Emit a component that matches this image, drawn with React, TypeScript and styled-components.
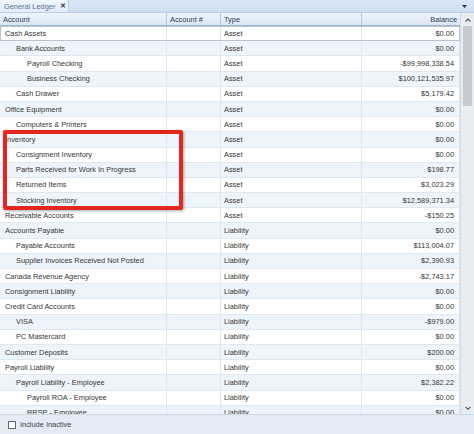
import React from "react";
import styled, { createGlobalStyle } from "styled-components";

const Global = createGlobalStyle`
  html, body { margin: 0; padding: 0; background: #ffffff; }
  body { font-family: "Liberation Sans", Arial, sans-serif; }
  * { box-sizing: border-box; }
`;

type Row = { name: string; level: number; type: string; balance: string };

const rows: Row[] = [
  { name: "Cash Assets", level: 0, type: "Asset", balance: "$0.00" },
  { name: "Bank Accounts", level: 1, type: "Asset", balance: "$0.00" },
  { name: "Payroll Checking", level: 2, type: "Asset", balance: "-$99,998,338.54" },
  { name: "Business Checking", level: 2, type: "Asset", balance: "$100,121,535.97" },
  { name: "Cash Drawer", level: 1, type: "Asset", balance: "$5,179.42" },
  { name: "Office Equipment", level: 0, type: "Asset", balance: "$0.00" },
  { name: "Computers & Printers", level: 1, type: "Asset", balance: "$0.00" },
  { name: "Inventory", level: 0, type: "Asset", balance: "$0.00" },
  { name: "Consignment Inventory", level: 1, type: "Asset", balance: "$0.00" },
  { name: "Parts Received for Work In Progress", level: 1, type: "Asset", balance: "$198.77" },
  { name: "Returned Items", level: 1, type: "Asset", balance: "$3,023.29" },
  { name: "Stocking Inventory", level: 1, type: "Asset", balance: "$12,589,371.34" },
  { name: "Receivable Accounts", level: 0, type: "Asset", balance: "-$150.25" },
  { name: "Accounts Payable", level: 0, type: "Liability", balance: "$0.00" },
  { name: "Payable Accounts", level: 1, type: "Liability", balance: "$113,004.07" },
  { name: "Supplier Invoices Received Not Posted", level: 1, type: "Liability", balance: "$2,390.93" },
  { name: "Canada Revenue Agency", level: 0, type: "Liability", balance: "-$2,743.17" },
  { name: "Consignment Liability", level: 0, type: "Liability", balance: "$0.00" },
  { name: "Credit Card Accounts", level: 0, type: "Liability", balance: "$0.00" },
  { name: "VISA", level: 1, type: "Liability", balance: "-$979.00" },
  { name: "PC Mastercard", level: 1, type: "Liability", balance: "$0.00" },
  { name: "Customer Deposits", level: 0, type: "Liability", balance: "$200.00" },
  { name: "Payroll Liability", level: 0, type: "Liability", balance: "$0.00" },
  { name: "Payroll Liability - Employee", level: 1, type: "Liability", balance: "$2,382.22" },
  { name: "Payroll ROA - Employee", level: 2, type: "Liability", balance: "$0.00" },
  { name: "RRSP -  Employee", level: 2, type: "Liability", balance: "$0.00" },
];

const Window = styled.div`
  width: 474px;
  height: 434px;
  display: flex;
  flex-direction: column;
  overflow: hidden;
  font-size: 7.4px;
  color: #353535;
  position: relative;
  background: #ffffff;
`;

const TabStrip = styled.div`
  height: 13px;
  flex: none;
  display: flex;
  align-items: stretch;
  background: linear-gradient(#dbe7f6, #cfdff2);
  border-bottom: 1px solid #b9cde6;
`;

const Tab = styled.div`
  width: 69px;
  display: flex;
  align-items: center;
  gap: 5px;
  padding: 0 0 0 4px;
  background: linear-gradient(#f1f6fc, #e2ecf8);
  border-right: 1px solid #b7cbe3;
  color: #5d7594;
`;

const TabClose = styled.span`
  font-weight: bold;
  color: #2b3a4f;
  font-size: 7px;
`;

const StripSpacer = styled.div`
  flex: 1;
`;

const DropArrow = styled.div`
  width: 12px;
  display: flex;
  align-items: center;
  justify-content: center;
  margin-right: 4px;
`;

const Main = styled.div`
  height: 401px;
  flex: none;
  display: flex;
`;

const GridPane = styled.div`
  width: 460px;
  display: flex;
  flex-direction: column;
  overflow: hidden;
`;

const cols = "167px 54px 141px 98px";

const HeaderRow = styled.div`
  height: 13px;
  flex: none;
  display: grid;
  grid-template-columns: ${cols};
  background: linear-gradient(#eef4fb, #dae6f4);
  border-bottom: 1px solid #9fb6d2;
  color: #2a3c55;
`;

const HeaderCell = styled.div<{ $right?: boolean; $last?: boolean }>`
  display: flex;
  align-items: center;
  justify-content: ${(p) => (p.$right ? "flex-end" : "flex-start")};
  padding: ${(p) => (p.$right ? "0 3px 0 0" : "0 0 0 3px")};
  border-right: ${(p) => (p.$last ? "none" : "1px solid #b4c7de")};
  white-space: nowrap;
`;

const Body = styled.div`
  flex: 1;
  overflow: hidden;
`;

const DataRow = styled.div<{ $alt: boolean; $focus?: boolean }>`
  height: 15.2px;
  display: grid;
  grid-template-columns: ${cols};
  background: ${(p) => (p.$alt ? "#eef4fb" : "#ffffff")};
  border-bottom: 1px solid #dfe7f0;
  outline: ${(p) => (p.$focus ? "1px solid #b9c4d0" : "none")};
  outline-offset: -1px;
`;

const Cell = styled.div<{ $indent?: number; $right?: boolean }>`
  display: flex;
  align-items: center;
  justify-content: ${(p) => (p.$right ? "flex-end" : "flex-start")};
  padding-left: ${(p) => (p.$right ? 0 : 3 + (p.$indent ?? 0) * 11)}px;
  padding-right: ${(p) => (p.$right ? 5 : 0)}px;
  border-right: 1px solid #dfe6ef;
  white-space: nowrap;
  overflow: hidden;
`;

const NameCell = styled(Cell)`
  padding-left: ${(p) => 5 + (p.$indent ?? 0) * 11}px;
`;

const ScrollBar = styled.div`
  width: 14px;
  flex: none;
  display: flex;
  flex-direction: column;
  background: #e9edf2;
  border-left: 1px solid #cfd8e3;
`;

const ScrollBtn = styled.div`
  height: 13px;
  flex: none;
  display: flex;
  align-items: center;
  justify-content: center;
`;

const Track = styled.div`
  flex: 1;
  display: flex;
  flex-direction: column;
  padding: 0 2px;
`;

const Thumb = styled.div`
  height: 80px;
  background: #c5cad1;
  border-radius: 1px;
`;

const Footer = styled.div`
  flex: 1;
  display: flex;
  align-items: center;
  gap: 4px;
  padding-left: 8px;
  background: #e3ebf5;
  border-top: 1px solid #cbd8e8;
  color: #3b3b3b;
`;

const CheckBox = styled.div`
  width: 8px;
  height: 8px;
  border: 1px solid #5f6670;
  background: #ffffff;
`;

const Highlight = styled.div`
  position: absolute;
  left: 3px;
  top: 130px;
  width: 180px;
  height: 80px;
  border: 4px solid #e2281e;
  border-radius: 2px;
  box-shadow: 1px 1px 3px rgba(0, 0, 0, 0.35);
  pointer-events: none;
`;

const Chevron = ({ up }: { up: boolean }) => (
  <svg width="6" height="4" viewBox="0 0 6 4">
    <path
      d={up ? "M0.5 3.5 L3 1 L5.5 3.5" : "M0.5 0.8 L3 3.3 L5.5 0.8"}
      fill="none"
      stroke="#4a5566"
      strokeWidth="1.1"
    />
  </svg>
);

export default function App() {
  return (
    <>
      <Global />
      <Window>
        <TabStrip>
          <Tab>
            <span>General Ledger</span>
            <TabClose>✕</TabClose>
          </Tab>
          <StripSpacer />
          <DropArrow>
            <svg width="5" height="3" viewBox="0 0 5 3">
              <path d="M0 0 L5 0 L2.5 3 Z" fill="#1f3550" />
            </svg>
          </DropArrow>
        </TabStrip>
        <Main>
          <GridPane>
            <HeaderRow>
              <HeaderCell>Account</HeaderCell>
              <HeaderCell>Account #</HeaderCell>
              <HeaderCell>Type</HeaderCell>
              <HeaderCell $right $last>
                Balance
              </HeaderCell>
            </HeaderRow>
            <Body>
              {rows.map((r, i) => (
                <DataRow key={i} $alt={i % 2 === 1} $focus={i === 0}>
                  <NameCell $indent={r.level}>{r.name}</NameCell>
                  <Cell />
                  <Cell>{r.type}</Cell>
                  <Cell $right>{r.balance}</Cell>
                </DataRow>
              ))}
            </Body>
          </GridPane>
          <ScrollBar>
            <ScrollBtn>
              <Chevron up />
            </ScrollBtn>
            <Track>
              <Thumb />
            </Track>
            <ScrollBtn>
              <Chevron up={false} />
            </ScrollBtn>
          </ScrollBar>
        </Main>
        <Footer>
          <CheckBox />
          <span>Include Inactive</span>
        </Footer>
        <Highlight />
      </Window>
    </>
  );
}
